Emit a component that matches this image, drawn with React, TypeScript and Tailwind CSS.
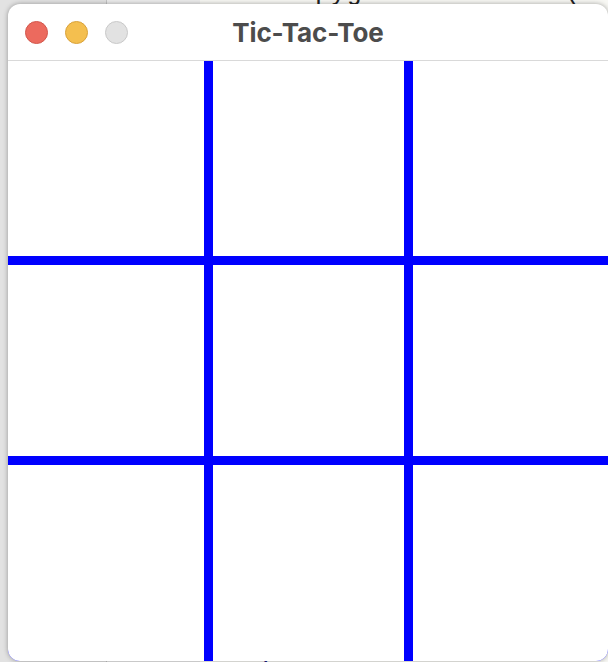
const CodeStrip = () => (
  <div className="absolute inset-0 flex font-['Liberation_Mono',monospace] text-[26px] text-[#222]">
    <div className="w-[107px] bg-[#e2e2e2] border-r border-[#c4c4c4]" />
    <div className="w-[93px] bg-[#ececec] relative">
      <div className="absolute left-[36px] top-[-26px] text-[#333]">49</div>
    </div>
    <div className="flex-1 bg-[#f7f7f3] relative">
      <div className="absolute left-[115px] top-[-26px] whitespace-nowrap">
        pygame.draw.line(sc
      </div>
      <div className="absolute left-[-5px] bottom-[-31px] whitespace-nowrap text-[#1d1d80]">
        &nbsp;&nbsp;&nbsp;&nbsp;i&nbsp;&nbsp;&nbsp;ame_over=True
      </div>
    </div>
  </div>
);

const TrafficLights = () => (
  <div className="flex items-center gap-[17px] pl-[17px]">
    <span className="block w-[23px] h-[23px] rounded-full bg-[#ec6a5e] border border-[#d2574c]" />
    <span className="block w-[23px] h-[23px] rounded-full bg-[#f4bf4f] border border-[#d9a23a]" />
    <span className="block w-[23px] h-[23px] rounded-full bg-[#e2e2e2] border border-[#c9c9c9]" />
  </div>
);

const Board = () => {
  const cells = Array.from({ length: 9 });
  return (
    <div className="grid grid-cols-[196px_191px_1fr] grid-rows-[195px_191px_1fr] gap-[9px] bg-[#0000ff] h-[600px]">
      {cells.map((_, i) => (
        <div key={i} className="bg-white" />
      ))}
    </div>
  );
};

export default function App() {
  return (
    <div className="relative w-[608px] h-[662px] overflow-hidden bg-[#e6e6e6]">
      <CodeStrip />
      <div className="relative ml-[8px] mt-[4px] w-[600px] h-[657px] bg-white rounded-[12px] overflow-hidden shadow-[0_0_5px_rgba(0,0,0,0.35)]">
        <div className="relative h-[57px] flex items-center border-b border-[#d9d9d9]">
          <TrafficLights />
          <div className="absolute inset-0 flex items-center justify-center font-['Inter',sans-serif] font-bold text-[26px] text-[#4c4c4c] tracking-[-0.1px]">
            Tic-Tac-Toe
          </div>
        </div>
        <Board />
      </div>
    </div>
  );
}
